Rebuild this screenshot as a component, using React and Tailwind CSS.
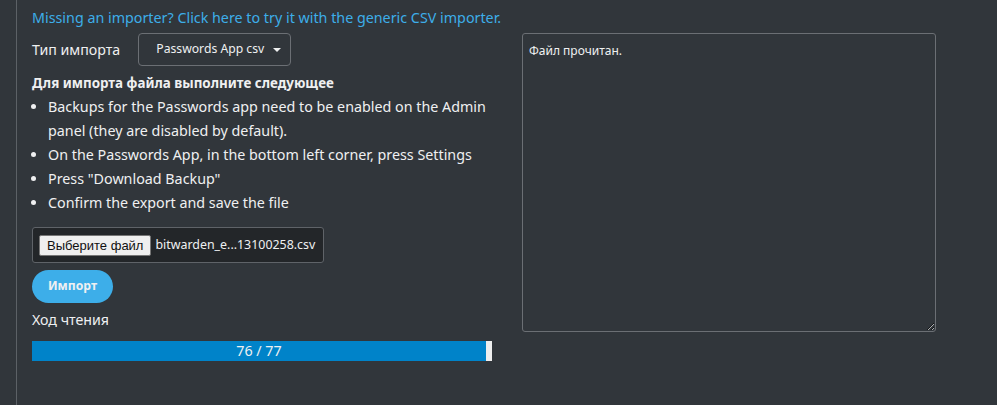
import React from "react";

export default function App() {
  const font = { fontFamily: '"Noto Sans", sans-serif' };
  return (
    <div className="w-[997px] h-[405px] bg-[#31363b] text-[#eff0f1] overflow-hidden flex" style={font}>
      <div className="w-[16px] shrink-0" />
      <div className="w-px bg-[#5c6166] shrink-0" />
      <div className="flex-1 pl-[15px] pt-[7px] flex flex-col">
        <a className="text-[#3daee9] text-[14.3px] leading-[22px] block">
          Missing an importer? Click here to try it with the generic CSV importer.
        </a>
        <div className="flex gap-[30px] mt-[4px]">
          <div className="w-[460px] flex flex-col">
            <div className="flex items-center gap-[18px] h-[33px]">
              <span className="text-[14.2px]">Тип импорта</span>
              <div className="h-[33px] w-[153px] border border-[#6b6f74] rounded-[4px] flex items-center pl-[17px] gap-[9px] text-[12.2px] whitespace-nowrap">
                <span>Passwords App csv</span>
                <svg width="8" height="4" viewBox="0 0 8 4"><path d="M0 0h8L4 4z" fill="#eff0f1" /></svg>
              </div>
            </div>
            <div className="font-bold text-[13.4px] mt-[6px] leading-[22px]">Для импорта файла выполните следующее</div>
            <ul className="list-disc pl-[16px] text-[14.3px] leading-[24px] mt-[1px]">
              <li>Backups for the Passwords app need to be enabled on the Admin panel (they are disabled by default).</li>
              <li>On the Passwords App, in the bottom left corner, press Settings</li>
              <li>Press "Download Backup"</li>
              <li>Confirm the export and save the file</li>
            </ul>
            <div className="mt-[12px] w-[292px] h-[36px] bg-[#232629] border border-[#5f6368] rounded-[3px] flex items-center pl-[6px] gap-[4px] whitespace-nowrap">
              <span className="bg-[#efefef] text-[#111] border border-[#767676] rounded-[2px] px-[7px] h-[21px] flex items-center text-[13px] leading-none" style={{ fontFamily: '"Liberation Sans", Arial, sans-serif' }}>Выберите файл</span>
              <span className="text-[12.4px]">bitwarden_e...13100258.csv</span>
            </div>
            <button className="mt-[7px] w-[81px] h-[33px] rounded-full bg-[#3daee9] text-[#eff0f1] font-bold text-[12.2px]">Импорт</button>
            <div className="text-[14.2px] mt-[6px] leading-[22px]">Ход чтения</div>
            <div className="mt-[10px] w-[460px] h-[20px] bg-[#eeeeee] relative flex">
              <div className="h-full bg-[#0083c9]" style={{ width: `${(76 / 77) * 100}%` }} />
              <div className="absolute inset-0 flex items-center justify-center text-[14.3px] text-[#eff0f1] pr-[6px]">76 / 77</div>
            </div>
          </div>
          <textarea
            readOnly
            value="Файл прочитан."
            className="w-[414px] h-[299px] bg-transparent border border-[#6b6f74] rounded-[3px] px-[6px] py-[8px] text-[12px] text-[#eff0f1] outline-none"
            style={font}
          />
        </div>
      </div>
    </div>
  );
}
